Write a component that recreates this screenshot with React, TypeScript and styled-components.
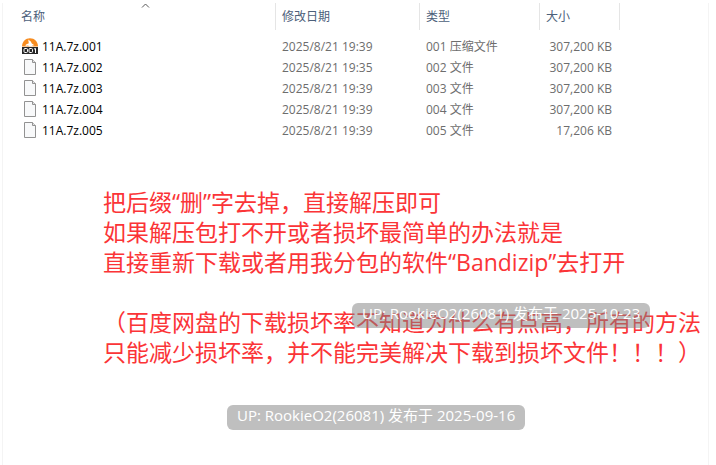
import React from "react";
import styled, { createGlobalStyle } from "styled-components";

const GlobalStyle = createGlobalStyle`
  * { box-sizing: border-box; }
  body {
    margin: 0;
    background: #fff;
    font-family: "Open Sans", "Noto Sans CJK SC", sans-serif;
    font-size: 12px;
  }
`;

const Sheet = styled.main`
  margin: 3px 7px 0 2px;
  min-height: calc(100vh - 3px);
  border: solid #f4f4f4;
  border-width: 0 1px;
`;

const FileTable = styled.table`
  table-layout: fixed;
  width: 617px;
  border-collapse: separate;
  border-spacing: 0;
`;

const Column = styled.col<{ $width: number }>`
  width: ${(p) => p.$width}px;
`;

const HeaderCell = styled.th<{ $lead?: boolean }>`
  height: 27px;
  padding: 0 0 0 ${(p) => (p.$lead ? 12 : 0)}px;
  border-right: 1px solid #e5e5e5;
`;

const SortButton = styled.button`
  position: relative;
  display: block;
  width: 100%;
  height: 27px;
  padding: 0 6px;
  border: 0;
  background: none;
  color: #4c607a;
  font: inherit;
  font-weight: 400;
  line-height: 27px;
  text-align: left;
`;

const Caret = styled.svg`
  position: absolute;
  top: 0;
  left: 50%;
  margin-left: -4px;
`;

const Body = styled.tbody`
  &::before {
    content: "";
    display: block;
    height: 6px;
  }
`;

const Cell = styled.td<{ $right?: boolean }>`
  height: 21px;
  padding: 0 8px 0 6px;
  color: #6d6d6d;
  line-height: 20px;
  text-align: ${(p) => (p.$right ? "right" : "left")};
  white-space: nowrap;
`;

const NameCell = styled(Cell)`
  padding-left: 18px;
  color: #000;
`;

const FileName = styled.div`
  display: flex;
  align-items: center;
  gap: 4px;
  height: 21px;
`;

const Note = styled.section`
  position: relative;
  margin: 46px 0 0 100px;
  color: #fb3437;
  font-size: 23px;
  line-height: 30px;
  white-space: nowrap;
`;

const Paragraph = styled.p`
  margin: 0 0 30px;
`;

const Stamp = styled.div`
  width: max-content;
  height: 25px;
  padding: 0 10px;
  border-radius: 6px;
  background: rgba(128, 128, 128, 0.5);
  color: #fff;
  font-size: 15px;
  line-height: 20px;
  white-space: nowrap;
`;

const FloatingStamp = styled(Stamp)`
  position: absolute;
  top: 116px;
  left: 249px;
`;

const FooterStamp = styled(Stamp)`
  margin: 38px auto 0 224px;
`;

const ArchiveIcon = () => (
  <svg width="17" height="17" viewBox="0 0 17 17" aria-hidden="true">
    <path d="M1 8.6C1 3.4 4.6 0.2 9 0.2s8 3.2 8 8.4z" fill="#f78c1f" />
    <path d="M7.2 1.4l2.6 2.2 1 2 2.6 1.6-2.4.2 1.4 1.2H8.6L7 7.4 4.4 8 5 6.6l2.8-1.4z" fill="#fff" />
    <rect x="1" y="9" width="16" height="7" fill="#272727" />
    <g fill="none" stroke="#fff" strokeWidth="1">
      <rect x="3" y="10.5" width="3.5" height="4" rx="1" />
      <rect x="8" y="10.5" width="3.5" height="4" rx="1" />
      <path d="M13 11l1.5-.5V15" />
    </g>
  </svg>
);

const FileIcon = () => (
  <svg width="17" height="17" viewBox="0 0 17 17" aria-hidden="true">
    <path d="M3.5 0.5h8l3 3v12h-11z" fill="#f8f9fa" stroke="#929292" />
    <path d="M11.5 0.5v3h3" fill="#e4e4e4" stroke="#929292" />
  </svg>
);

const headers = ["名称", "修改日期", "类型", "大小"];
const widths = [273, 144, 120, 80];

const files = [
  { name: "11A.7z.001", date: "2025/8/21 19:39", type: "001 压缩文件", size: "307,200 KB" },
  { name: "11A.7z.002", date: "2025/8/21 19:35", type: "002 文件", size: "307,200 KB" },
  { name: "11A.7z.003", date: "2025/8/21 19:39", type: "003 文件", size: "307,200 KB" },
  { name: "11A.7z.004", date: "2025/8/21 19:39", type: "004 文件", size: "307,200 KB" },
  { name: "11A.7z.005", date: "2025/8/21 19:39", type: "005 文件", size: "17,206 KB" },
];

export default function App() {
  return (
    <>
      <GlobalStyle />
      <Sheet>
        <FileTable>
          <colgroup>
            {widths.map((w) => (
              <Column key={w} $width={w} />
            ))}
          </colgroup>
          <thead>
            <tr>
              {headers.map((label, i) => (
                <HeaderCell key={label} scope="col" $lead={i === 0}>
                  <SortButton type="button">
                    {label}
                    {i === 0 && (
                      <Caret width="9" height="6" viewBox="0 0 9 6" aria-hidden="true">
                        <path d="M1 4.5L4.5 1 8 4.5" fill="none" stroke="#5a5a5a" />
                      </Caret>
                    )}
                  </SortButton>
                </HeaderCell>
              ))}
            </tr>
          </thead>
          <Body>
            {files.map((file, i) => (
              <tr key={file.name}>
                <NameCell>
                  <FileName>
                    {i === 0 ? <ArchiveIcon /> : <FileIcon />}
                    <span>{file.name}</span>
                  </FileName>
                </NameCell>
                <Cell>{file.date}</Cell>
                <Cell>{file.type}</Cell>
                <Cell $right>{file.size}</Cell>
              </tr>
            ))}
          </Body>
        </FileTable>
        <Note>
          <Paragraph>
            把后缀“删”字去掉，直接解压即可
            <br />
            如果解压包打不开或者损坏最简单的办法就是
            <br />
            直接重新下载或者用我分包的软件“Bandizip”去打开
          </Paragraph>
          <Paragraph>
            （百度网盘的下载损坏率不知道为什么有点高，所有的方法
            <br />
            只能减少损坏率，并不能完美解决下载到损坏文件！！！）
          </Paragraph>
          <FloatingStamp>UP: RookieO2(26081) 发布于 2025-10-23</FloatingStamp>
        </Note>
        <FooterStamp>UP: RookieO2(26081) 发布于 2025-09-16</FooterStamp>
      </Sheet>
    </>
  );
}
